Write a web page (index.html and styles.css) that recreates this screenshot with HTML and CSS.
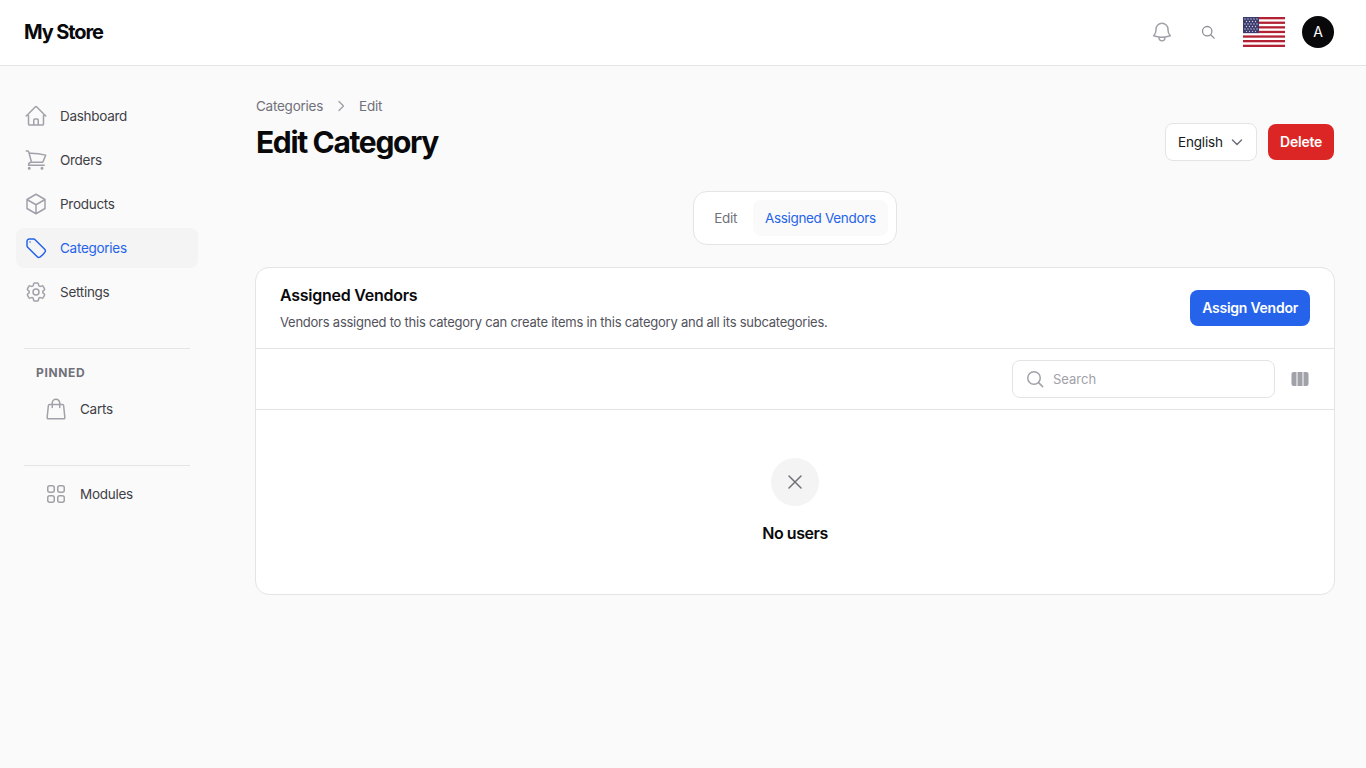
FILE: index.html
```html
<!DOCTYPE html>
<html lang="en">
<head>
  <meta charset="UTF-8" />
  <title>Edit Category - My Store</title>
  <link rel="stylesheet" href="styles.css">
</head>
<body>
  <header class="topbar">
    <div class="brand">My Store</div>
    <div class="topbar-actions">
      <svg class="icon-bell" width="24" height="24" viewBox="0 0 24 24" fill="none" stroke="#a1a1aa" stroke-width="1.5" stroke-linecap="round" stroke-linejoin="round"><path d="M14.9 17.1c1.9-.2 3.7-.7 5.4-1.3-1.4-1.6-2.3-3.7-2.3-5.9V9.2a6 6 0 0 0-12 0v.7c0 2.2-.8 4.3-2.3 5.9 1.7.6 3.5 1.1 5.4 1.3m5.8 0c-1.9.2-3.9.2-5.8 0m5.8 0a3 3 0 1 1-5.800 0"/></svg>
      <svg class="icon-search" width="16" height="16" viewBox="0 0 16 16" fill="none" stroke="#8f8f98" stroke-width="1.3" stroke-linecap="round"><circle cx="7.2" cy="7.2" r="4.7"/><path d="M10.7 10.7l3.4 3.4"/></svg>
      <svg class="flag" width="42" height="32" viewBox="0 0 42 32">
        <rect y="1" width="42" height="30" fill="#fff"/>
        <g fill="#b22234">
          <rect y="1" width="42" height="2.3"/><rect y="5.6" width="42" height="2.3"/><rect y="10.2" width="42" height="2.3"/><rect y="14.8" width="42" height="2.3"/><rect y="19.4" width="42" height="2.3"/><rect y="24" width="42" height="2.3"/><rect y="28.7" width="42" height="2.3"/>
        </g>
        <rect y="1" width="16" height="16.1" fill="#3c3b6e"/>
        <g fill="#d4d4e4">
          <circle cx="2" cy="3" r=".65"/><circle cx="5" cy="3" r=".65"/><circle cx="8" cy="3" r=".65"/><circle cx="11" cy="3" r=".65"/><circle cx="14" cy="3" r=".65"/>
          <circle cx="3.5" cy="5.5" r=".65"/><circle cx="6.5" cy="5.5" r=".65"/><circle cx="9.5" cy="5.5" r=".65"/><circle cx="12.5" cy="5.5" r=".65"/>
          <circle cx="2" cy="8" r=".65"/><circle cx="5" cy="8" r=".65"/><circle cx="8" cy="8" r=".65"/><circle cx="11" cy="8" r=".65"/><circle cx="14" cy="8" r=".65"/>
          <circle cx="3.5" cy="10.5" r=".65"/><circle cx="6.5" cy="10.5" r=".65"/><circle cx="9.5" cy="10.5" r=".65"/><circle cx="12.5" cy="10.5" r=".65"/>
          <circle cx="2" cy="13" r=".65"/><circle cx="5" cy="13" r=".65"/><circle cx="8" cy="13" r=".65"/><circle cx="11" cy="13" r=".65"/><circle cx="14" cy="13" r=".65"/>
          <circle cx="3.5" cy="15.3" r=".65"/><circle cx="6.5" cy="15.3" r=".65"/><circle cx="9.5" cy="15.3" r=".65"/><circle cx="12.5" cy="15.3" r=".65"/>
        </g>
      </svg>
      <div class="avatar">A</div>
    </div>
  </header>

  <div class="layout">
    <aside class="sidebar">
      <nav class="nav">
        <a class="nav-item">
          <svg width="24" height="24" viewBox="0 0 24 24" fill="none" stroke="#a1a1aa" stroke-width="1.5" stroke-linecap="round" stroke-linejoin="round"><path d="M2.25 12l8.96-8.96a1.13 1.13 0 0 1 1.59 0L21.75 12M4.5 9.75v10.13c0 .62.5 1.12 1.13 1.12H9.750v-4.880c0-.62.5-1.120 1.130-1.120h2.250c.62 0 1.120.5 1.120 1.120V21h4.130c.62 0 1.120-.5 1.120-1.120V9.750M8.250 21h8.250"/></svg>
          <span>Dashboard</span>
        </a>
        <a class="nav-item">
          <svg width="24" height="24" viewBox="0 0 24 24" fill="none" stroke="#a1a1aa" stroke-width="1.5" stroke-linecap="round" stroke-linejoin="round"><path d="M2.25 3h1.39c.51 0 .96.34 1.09.84l.38 1.44m0 0L7.5 14.25h11.25c1.12-2.3 2.1-4.68 2.94-7.14A60 60 0 0 0 5.1 5.28zM7.5 14.25a3 3 0 0 0-3 3h15.75M6 20.25a.75.75 0 1 1-1.5 0 .75.75 0 0 1 1.5 0zm12.75 0a.75.75 0 1 1-1.5 0 .75.75 0 0 1 1.5 0z"/></svg>
          <span>Orders</span>
        </a>
        <a class="nav-item">
          <svg width="24" height="24" viewBox="0 0 24 24" fill="none" stroke="#a1a1aa" stroke-width="1.5" stroke-linecap="round" stroke-linejoin="round"><path d="M21 7.5l-9-5.25L3 7.5m18 0l-9 5.25m9-5.25v9l-9 5.25M3 7.5l9 5.25M3 7.5v9l9 5.25m0-9v9"/></svg>
          <span>Products</span>
        </a>
        <a class="nav-item active">
          <svg width="24" height="24" viewBox="0 0 24 24" fill="none" stroke="#2563eb" stroke-width="1.5" stroke-linecap="round" stroke-linejoin="round"><path d="M9.57 3H5.25A2.25 2.25 0 0 0 3 5.25v4.32c0 .6.24 1.17.66 1.59l9.58 9.58c.7.7 1.76.88 2.6.37a18.1 18.1 0 0 0 5.22-5.22c.51-.84.33-1.9-.37-2.6l-9.58-9.58A2.25 2.25 0 0 0 9.57 3z"/><path d="M6 6h.01"/></svg>
          <span>Categories</span>
        </a>
        <a class="nav-item">
          <svg width="24" height="24" viewBox="0 0 24 24" fill="none" stroke="#a1a1aa" stroke-width="1.5" stroke-linecap="round" stroke-linejoin="round"><path d="M9.59 3.94c.09-.54.56-.94 1.11-.94h2.59c.55 0 1.02.4 1.11.94l.21 1.28c.06.37.31.68.64.87.07.04.15.08.22.13.32.19.72.25 1.07.12l1.22-.46a1.13 1.13 0 0 1 1.37.49l1.3 2.25c.27.48.16 1.08-.26 1.43l-1.01.83c-.29.24-.43.61-.42.98v.25c-.01.37.13.74.42.98l1.01.83c.42.35.53.95.26 1.43l-1.3 2.25a1.13 1.13 0 0 1-1.37.49l-1.22-.46c-.35-.13-.75-.07-1.07.12l-.22.13c-.33.19-.58.5-.64.87l-.21 1.28c-.09.54-.56.94-1.11.94h-2.59c-.55 0-1.02-.4-1.11-.94l-.21-1.28c-.06-.37-.31-.68-.64-.87l-.22-.13c-.32-.19-.72-.25-1.07-.12l-1.22.46a1.13 1.13 0 0 1-1.37-.49l-1.3-2.25a1.13 1.13 0 0 1 .26-1.43l1.01-.83c.29-.24.43-.61.42-.98v-.25c.01-.37-.13-.74-.42-.98l-1.01-.83a1.13 1.13 0 0 1-.26-1.43l1.3-2.25a1.13 1.13 0 0 1 1.37-.49l1.22.46c.35.13.75.07 1.07-.12.07-.05.15-.09.22-.13.33-.19.58-.5.64-.87z"/><circle cx="12" cy="12" r="3"/></svg>
          <span>Settings</span>
        </a>
      </nav>

      <div class="nav-section pinned">
        <div class="nav-label">PINNED</div>
        <a class="nav-item sub">
          <svg width="24" height="24" viewBox="0 0 24 24" fill="none" stroke="#a1a1aa" stroke-width="1.5" stroke-linecap="round" stroke-linejoin="round"><path d="M15.75 10.5V6a3.75 3.75 0 1 0-7.5 0v4.5m11.36-1.99l1.26 12c.07.66-.45 1.24-1.12 1.24H4.25c-.67 0-1.19-.58-1.12-1.24l1.26-12c.06-.58.55-1.01 1.12-1.01h12.98c.57 0 1.06.43 1.12 1.01z"/></svg>
          <span>Carts</span>
        </a>
      </div>

      <div class="nav-section modules">
        <a class="nav-item sub">
          <svg width="24" height="24" viewBox="0 0 24 24" fill="none" stroke="#a1a1aa" stroke-width="1.5"><rect x="3.75" y="3.75" width="6.5" height="6.5" rx="2"/><rect x="13.75" y="3.75" width="6.5" height="6.5" rx="2"/><rect x="3.75" y="13.75" width="6.5" height="6.5" rx="2"/><rect x="13.75" y="13.75" width="6.5" height="6.5" rx="2"/></svg>
          <span>Modules</span>
        </a>
      </div>
    </aside>

    <main class="content">
      <div class="breadcrumb">
        <span>Categories</span>
        <svg width="16" height="16" viewBox="0 0 16 16" fill="none" stroke="#a1a1aa" stroke-width="1.4" stroke-linecap="round" stroke-linejoin="round"><path d="M6 3.5L10.5 8 6 12.5"/></svg>
        <span>Edit</span>
      </div>

      <div class="page-head">
        <h1>Edit Category</h1>
        <div class="page-actions">
          <div class="lang-select">
            <span>English</span>
            <svg width="14" height="14" viewBox="0 0 14 14" fill="none" stroke="#71717a" stroke-width="1.5" stroke-linecap="round" stroke-linejoin="round"><path d="M2.5 5l4.500 4.500L11.500 5"/></svg>
          </div>
          <button class="btn btn-red">Delete</button>
        </div>
      </div>

      <div class="tabs-wrap">
        <div class="tabs">
          <a class="tab">Edit</a>
          <a class="tab active">Assigned Vendors</a>
        </div>
      </div>

      <section class="card">
        <div class="card-head">
          <div class="card-title">
            <h2>Assigned Vendors</h2>
            <p>Vendors assigned to this category can create items in this category and all its subcategories.</p>
          </div>
          <button class="btn btn-blue">Assign Vendor</button>
        </div>

        <div class="toolbar">
          <div class="search-box">
            <svg width="20" height="20" viewBox="0 0 20 20" fill="none" stroke="#a1a1aa" stroke-width="1.5" stroke-linecap="round"><circle cx="9" cy="9" r="6.25"/><path d="M13.6 13.6l4 4"/></svg>
            <span>Search</span>
          </div>
          <svg class="columns" width="20" height="20" viewBox="0 0 20 20" fill="#a1a1aa"><path d="M3.500 3H6.500v14H3.500A2 2 0 0 1 1.500 15V5A2 2 0 0 1 3.500 3z"/><rect x="7.500" y="3" width="5" height="14"/><path d="M13.500 3h3A2 2 0 0 1 18.500 5v10a2 2 0 0 1-2 2h-3z"/></svg>
        </div>

        <div class="empty">
          <div class="empty-icon">
            <svg width="24" height="24" viewBox="0 0 24 24" fill="none" stroke="#71717a" stroke-width="1.5" stroke-linecap="round"><path d="M6 6l12 12M18 6L6 18"/></svg>
          </div>
          <div class="empty-text">No users</div>
        </div>
      </section>
    </main>
  </div>
</body>
</html>
```

FILE: styles.css
```css
* {
  margin: 0;
  padding: 0;
  box-sizing: border-box;
}

body {
  font-family: Inter, 'Liberation Sans', sans-serif;
  background: #fafafa;
  color: #3f3f46;
  font-size: 14px;
  min-height: 100vh;
}

.topbar {
  height: 66px;
  background: #fff;
  border-bottom: 1px solid #e4e4e7;
  display: flex;
  align-items: center;
  justify-content: space-between;
  padding: 0 32px 2px 24px;
}

.brand {
  font-size: 20px;
  font-weight: 700;
  letter-spacing: -1.1px;
  color: #09090b;
}

.topbar-actions {
  display: flex;
  align-items: center;
}

.icon-search {
  margin-left: 26px;
}

.flag {
  margin-left: 27px;
}

.avatar {
  width: 32px;
  height: 32px;
  margin-left: 17px;
  border-radius: 50%;
  background: #09090b;
  color: #fff;
  font-size: 14px;
  display: flex;
  align-items: center;
  justify-content: center;
}

.layout {
  display: flex;
}

.sidebar {
  width: 206px;
  flex-shrink: 0;
  padding: 30px 0 0 16px;
}

.nav {
  display: flex;
  flex-direction: column;
  gap: 4px;
}

.nav-item {
  display: flex;
  align-items: center;
  gap: 12px;
  width: 182px;
  height: 40px;
  padding-left: 8px;
  border-radius: 8px;
  color: #3f3f46;
  font-size: 13.5px;
  letter-spacing: -0.28px;
}

.nav-item span {
  margin-bottom: 1px;
}

.nav-item.active {
  background: #f4f4f5;
  color: #2563eb;
}

.nav-item.sub {
  padding-left: 28px;
}

.nav-section {
  margin: 0 8px;
  width: 166px;
  border-top: 1px solid #e4e4e7;
}

.nav-section .nav-item {
  width: 166px;
  margin-left: -8px;
}

.pinned {
  margin-top: 36px;
  padding-top: 16px;
}

.nav-label {
  font-size: 12px;
  font-weight: 700;
  letter-spacing: 0.65px;
  color: #71717a;
  padding-left: 12px;
  line-height: 16px;
}

.pinned .nav-item {
  margin-top: 8px;
}

.modules {
  margin-top: 36px;
  padding-top: 8px;
}

.content {
  flex: 1;
  padding: 30px 32px 0 50px;
}

.breadcrumb {
  display: flex;
  align-items: center;
  gap: 10px;
  height: 20px;
  color: #71717a;
  font-size: 13.5px;
  letter-spacing: -0.25px;
}

.page-head {
  display: flex;
  align-items: center;
  justify-content: space-between;
  margin-top: 7px;
}

h1 {
  font-size: 30px;
  line-height: 36px;
  font-weight: 700;
  letter-spacing: -1.35px;
  color: #09090b;
}

.page-actions {
  display: flex;
  align-items: center;
  gap: 11px;
}

.lang-select {
  display: flex;
  align-items: center;
  justify-content: space-between;
  width: 92px;
  height: 38px;
  padding: 0 12px;
  background: #fff;
  border: 1px solid #e4e4e7;
  border-radius: 8px;
  color: #18181b;
  font-size: 13.5px;
  letter-spacing: -0.2px;
}

.lang-select span {
  margin-bottom: 1px;
}

.btn {
  height: 36px;
  padding: 0 12px 2px;
  border: 0;
  border-radius: 8px;
  color: #fff;
  font-family: inherit;
  font-size: 14px;
  font-weight: 600;
  letter-spacing: -0.25px;
}

.btn-red {
  background: #dc2626;
}

.btn-blue {
  background: #2563eb;
}

.tabs-wrap {
  display: flex;
  justify-content: center;
  margin-top: 30px;
}

.tabs {
  display: flex;
  gap: 4px;
  padding: 8px;
  background: #fff;
  border: 1px solid #e4e4e7;
  border-radius: 14px;
}

.tab {
  height: 36px;
  padding: 0 12px;
  border-radius: 8px;
  display: flex;
  align-items: center;
  color: #71717a;
  font-size: 13.5px;
  letter-spacing: -0.33px;
}

.tab.active {
  background: #fafafa;
  color: #2563eb;
}

.card {
  margin: 22px -1px 0;
  background: #fff;
  border: 1px solid #e4e4e7;
  border-radius: 14px;
}

.card-head {
  display: flex;
  align-items: center;
  justify-content: space-between;
  height: 81px;
  padding: 0 24px;
  border-bottom: 1px solid #e4e4e7;
}

.card-title {
  padding-bottom: 3px;
}

h2 {
  font-size: 16px;
  line-height: 24px;
  font-weight: 600;
  letter-spacing: -0.25px;
  color: #09090b;
}

.card-head p {
  margin-top: 6px;
  font-size: 13px;
  line-height: 18px;
  letter-spacing: -0.24px;
  color: #52525b;
}

.toolbar {
  display: flex;
  align-items: center;
  justify-content: flex-end;
  gap: 15px;
  height: 61px;
  padding: 0 24px;
  border-bottom: 1px solid #e4e4e7;
}

.search-box {
  display: flex;
  align-items: center;
  gap: 8px;
  width: 263px;
  height: 38px;
  padding-left: 12px;
  background: #fff;
  border: 1px solid #e4e4e7;
  border-radius: 8px;
  color: #a1a1aa;
  font-size: 13px;
}

.empty {
  display: flex;
  flex-direction: column;
  align-items: center;
  height: 184px;
  padding-top: 48px;
}

.empty-icon {
  width: 48px;
  height: 48px;
  border-radius: 50%;
  background: #f4f4f5;
  display: flex;
  align-items: center;
  justify-content: center;
}

.empty-text {
  margin-top: 15px;
  font-size: 16px;
  line-height: 24px;
  font-weight: 600;
  letter-spacing: -0.45px;
  color: #09090b;
}
```
